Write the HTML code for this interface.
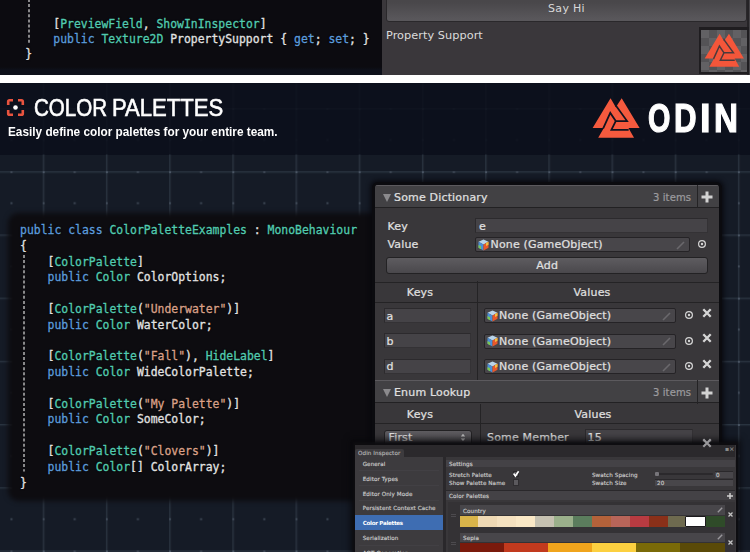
<!DOCTYPE html>
<html lang="en">
<head>
<meta charset="utf-8">
<title>Odin Inspector - Color Palettes</title>
<style>
*{margin:0;padding:0;box-sizing:border-box}
html,body{width:750px;height:560px;overflow:hidden;background:#fff}
body{position:relative;font-family:"Liberation Sans","DejaVu Sans",sans-serif;color:#e0e0e0}
.abs{position:absolute}
/* ---------- top strip ---------- */
#top{left:0;top:0;width:750px;height:75px;background:#0c0b10;overflow:hidden}
#topnavy{left:0;top:67px;width:382px;height:8px;background:linear-gradient(#0c0b10,#0d101a 40%)}
#topinsp{left:382px;top:0;width:368px;height:75px;background:#3a373b}
#sayhi{left:386px;top:-5px;width:361px;height:26.5px;border-radius:3px;background:linear-gradient(#49474a 25%,#59575b 92%);border:1px solid #2a282b;color:#d8d8d8;font-family:"DejaVu Sans","Liberation Sans",sans-serif;font-size:11px;letter-spacing:.3px;text-align:center;line-height:26px}
.code{font-family:"DejaVu Sans Mono","Liberation Mono",monospace;font-size:11.43px;letter-spacing:0px;line-height:15.78px;white-space:pre;color:#e2e2e2;-webkit-text-stroke:.3px currentColor;text-shadow:0 0 2px #000}
.k{color:#5c9cdc;-webkit-text-stroke-color:#5c9cdc}.t{color:#52cbb0;-webkit-text-stroke-color:#52cbb0}.s{color:#d9a088;-webkit-text-stroke-color:#d9a088}
/* ---------- main ---------- */
#main{left:0;top:83px;width:750px;height:469px;background:#0c101c;overflow:hidden}
#gridbg{left:0;top:71.5px;width:750px;height:398px;background:#151b26}
#title{left:34.6px;top:10.6px;font-size:24.4px;line-height:28px;color:#fff;white-space:nowrap;-webkit-text-stroke:.6px #fff}
#title span{position:absolute;top:0;display:block;transform-origin:0 0}
#t1{left:-.4px;transform:scaleX(.842)}#t2{left:77.9px;transform:scaleX(.905)}
#sub{left:8px;top:41px;font-size:12.3px;font-weight:bold;color:#fff;white-space:nowrap;line-height:16px;transform-origin:0 0;transform:scaleX(.96)}
#odin span{position:absolute;top:11.3px;font-size:40px;line-height:46px;font-weight:bold;color:#fff;-webkit-text-stroke:1.2px #fff;transform-origin:0 0;display:block}
#codebox{left:8px;top:130px;width:372px;height:288px;background:#0d0c10;border-radius:10px;filter:blur(2.6px)}

/* ---------- dictionary panel ---------- */
#dict{left:375px;top:185px;width:344px;height:270px;background:#39373a;border-radius:3px;box-shadow:0 0 0 3px #0b0b0f,0 0 4px 5px rgba(8,8,12,.8);font-family:"DejaVu Sans","Liberation Sans",sans-serif;font-size:11px;letter-spacing:.17px;color:#e0e0e0;overflow:hidden}
#dict .hdr{position:absolute;left:0;width:344px;height:23px;background:#424144;border-top:1px solid #5c5a5e;border-bottom:1.5px solid #222123}
#dict .ln{position:absolute;background:#242325}
#dict .tx{position:absolute;white-space:nowrap;line-height:14px;margin-top:.5px;-webkit-text-stroke:.22px currentColor}
#dict .fld{position:absolute;height:15px;background:#454347;border:1px solid #2c2a2d;border-bottom-color:#343235;border-right-color:#343235}
#dict .obj{position:absolute;height:15px;background:#48464a;border:1px solid #252326;border-radius:2px}
#dict .btn{position:absolute;border-radius:3px;background:linear-gradient(#5e5c60,#4a484c);border:1px solid #232224;text-align:center}
#dict .tri{position:absolute;width:0;height:0;border-left:4px solid transparent;border-right:4px solid transparent;border-top:8px solid #8b8a8d}
#dict .gray{color:#9c9b9e;font-size:10px;letter-spacing:.1px}

/* ---------- odin inspector window ---------- */
#win{left:355px;top:445px;width:381px;height:107px;background:#39373a;box-shadow:0 -1px 2px 2px rgba(14,13,16,.95),0 -1px 6px 5px rgba(8,8,12,.7);font-family:"DejaVu Sans","Liberation Sans",sans-serif;font-size:5.6px;color:#cdcdcd;-webkit-text-stroke:.15px currentColor;overflow:hidden;letter-spacing:.1px}
#win .wt{position:absolute;white-space:nowrap;line-height:8px}
#win .bar{position:absolute;background:#444246}
#win .sw{position:absolute;height:10.5px;top:0}
</style>
</head>
<body>
<!-- TOP STRIP -->
<div id="top" class="abs">
  <div id="topnavy" class="abs"></div>
  <svg class="abs" style="left:26px;top:0" width="6" height="46"><path d="M3 -1V45" stroke="#b2b2b2" stroke-width="1.5" stroke-dasharray="3 2.1" fill="none"/></svg>
  <div class="abs code" style="left:25.3px;top:16.5px;line-height:15.4px"><span style="display:inline-block;width:28px"></span>[<span class="t">PreviewField</span>, <span class="t">ShowInInspector</span>]
<span style="display:inline-block;width:28px"></span><span class="k">public</span> <span class="t">Texture2D</span> PropertySupport { <span class="k">get</span>; <span class="k">set</span>; }
}</div>
  <div id="topinsp" class="abs"></div>
  <div id="sayhi" class="abs">Say Hi</div>
  <div class="abs" style="left:747px;top:0;width:1.5px;height:75px;background:#252326"></div><div class="abs" style="left:748.5px;top:0;width:1.5px;height:75px;background:#454347"></div>
  <div id="ps" class="abs" style="left:386px;top:29.2px;font-family:'DejaVu Sans','Liberation Sans',sans-serif;font-size:11.3px;letter-spacing:.05px;color:#dcdcdc;white-space:nowrap">Property Support</div>
  <div class="abs" style="left:699px;top:27px;width:50px;height:47px;background:#1f1d20"></div>
  <svg class="abs" style="left:701px;top:30px" width="46" height="42" viewBox="0 0 46 42">
    <defs><pattern id="chk" width="16" height="16" patternUnits="userSpaceOnUse"><rect width="16" height="16" fill="#545356"/><rect width="8" height="8" fill="#626164"/><rect x="8" y="8" width="8" height="8" fill="#626164"/></pattern></defs>
    <rect width="46" height="42" fill="url(#chk)"/>
    <g transform="translate(-2.66,-1.47) scale(.0775,.0775)">
      <polygon fill="#f4563a" points="275,68 332,165 395,68 588,388 468,388 528,494 142,494 203,388 82,388"/>
      <g fill="none" stroke="#4a3a3c" stroke-width="19"><path d="M328,140 L453,313 L331,313 L284,409 L470,409"/><path d="M196,392 L272,225 L331,313"/></g>
    </g>
  </svg>
</div>

<!-- MAIN -->
<div id="main" class="abs">
  <div id="gridbg" class="abs"></div>
  <svg class="abs" style="left:0;top:0" width="750" height="469" viewBox="0 83 750 469">
    <defs>
      <pattern id="grid" x="42.7" y="171.2" width="63.2" height="63.2" patternUnits="userSpaceOnUse">
        <path d="M0 0.7H63.2M0.7 0V63.2" stroke="#222b37" stroke-width="3" fill="none" opacity=".4"/>
        <path d="M0 0.7H63.2M0.7 0V63.2" stroke="#29333f" stroke-width="1.2" fill="none"/>
        <rect x="-.6" y="-.6" width="2.6" height="2.6" fill="#4a5564"/>
        <rect x="31" y="-.2" width="2" height="2" fill="#434d5b"/>
        <rect x="-.2" y="31" width="2" height="2" fill="#434d5b"/>
        <rect x="31" y="31" width="2" height="2" fill="#3b4452"/>
      </pattern>
    </defs>
    <rect x="0" y="154.5" width="750" height="398" fill="url(#grid)"/>
    <rect x="0" y="83" width="750" height="71.5" fill="url(#grid)" opacity=".1"/>
  </svg>
  <svg class="abs" style="left:6px;top:15px" width="19" height="19" viewBox="0 0 19 19">
    <g fill="none" stroke="#e9543f" stroke-width="2.6" stroke-linejoin="round" stroke-linecap="butt">
      <path d="M2.2 7V3.6Q2.2 2.2 3.6 2.2H7"/><path d="M12 2.2H15.4Q16.8 2.2 16.8 3.6V7"/>
      <path d="M16.8 12V15.4Q16.8 16.8 15.4 16.8H12"/><path d="M7 16.8H3.6Q2.2 16.8 2.2 15.4V12"/>
    </g>
    <circle cx="9.5" cy="9.5" r="2.3" fill="#fff"/>
  </svg>
  <svg id="odinlogo" class="abs" style="left:585px;top:9px" width="60" height="52" viewBox="0 0 646 560">
    <g fill="#f55a3e">
      <polygon points="275,68 332,165 395,68 588,388 468,388 528,494 142,494 203,388 82,388"/>
    </g>
    <g fill="none" stroke="#10131f" stroke-width="19" stroke-linejoin="miter">
      <path d="M328,140 L453,313 L331,313 L284,409 L470,409"/>
      <path d="M196,392 L272,225 L331,313"/>
    </g>
  </svg>
  <div id="odin" class="abs" style="left:0;top:0"><span style="left:647.7px;transform:scale(.72,1.03)">O</span><span style="left:673.8px;transform:scale(.78,1.03)">D</span><span style="left:700.2px;transform:scale(.95,1.03)">I</span><span style="left:713.8px;transform:scale(.83,1.03)">N</span></div>
  <div id="title" class="abs"><span id="t1">COLOR</span> <span id="t2">PALETTES</span></div>
  <div id="sub" class="abs">Easily define color palettes for your entire team.</div>
  <div id="codebox" class="abs"></div>
  <svg class="abs" style="left:20.5px;top:172px" width="6" height="218"><path d="M3 0V216.5" stroke="#b2b2b2" stroke-width="1.5" stroke-dasharray="3 2.1" fill="none"/></svg>
  <div class="abs code" style="left:20px;top:140px"><span class="k">public</span> <span class="k">class</span> <span class="t">ColorPaletteExamples</span> : <span class="t">MonoBehaviour</span>
{
    [<span class="t">ColorPalette</span>]
    <span class="k">public</span> <span class="t">Color</span> ColorOptions;

    [<span class="t">ColorPalette</span>(<span class="s">"Underwater"</span>)]
    <span class="k">public</span> <span class="t">Color</span> WaterColor;

    [<span class="t">ColorPalette</span>(<span class="s">"Fall"</span>), <span class="t">HideLabel</span>]
    <span class="k">public</span> <span class="t">Color</span> WideColorPalette;

    [<span class="t">ColorPalette</span>(<span class="s">"My Palette"</span>)]
    <span class="k">public</span> <span class="t">Color</span> SomeColor;

    [<span class="t">ColorPalette</span>(<span class="s">"Clovers"</span>)]
    <span class="k">public</span> <span class="t">Color</span>[] ColorArray;
}</div>
</div>

<div class="abs" style="left:0;top:83px;width:750px;height:469px;overflow:hidden"><div class="abs" style="left:0;top:-83px;width:750px;height:560px">
<!-- DICTIONARY PANEL -->
<div id="dict" class="abs">
<div class="hdr" style="top:0"></div>
<div class="tri" style="left:8px;top:8.5px"></div>
<div class="tx" style="left:19px;top:5.5px">Some Dictionary</div>
<div class="tx gray" style="left:278px;top:5.5px">3 items</div>
<div class="ln" style="left:321.5px;top:0;width:1px;height:23px"></div>
<svg class="abs" style="left:326.4px;top:6px" width="12" height="12" viewBox="0 0 12 12"><path d="M6 .5V11.5M.5 6H11.5" stroke="#d2d2d2" stroke-width="3"/></svg>
<div class="tx" style="left:12.5px;top:34.5px">Key</div>
<div class="fld" style="left:100px;top:33.2px;width:233.29999999999995px"></div>
<div class="tx" style="left:104px;top:34.5px">e</div>
<div class="tx" style="left:12.5px;top:52.5px">Value</div>
<div class="obj" style="left:100px;top:52px;width:215px"></div>
<svg class="abs" style="left:103px;top:53.5px" width="11" height="12" viewBox="0 0 11 12"><polygon points="5.5,0.5 10.5,2.8 5.5,5.4 0.5,2.8" fill="#b9d4ea"/><polygon points="0.5,2.8 5.5,5.4 5.5,11.5 0.5,8.8" fill="#4a90d8"/><polygon points="10.5,2.8 5.5,5.4 5.5,11.5 10.5,8.8" fill="#e8582c"/><polygon points="0.5,6 3,7.2 3,10.2 0.5,8.8" fill="#7ec850"/><polygon points="8,4.1 10.5,2.8 10.5,5.8 8,7.1" fill="#f0c040"/></svg>
<div class="tx" style="left:115.5px;top:52.5px">None (GameObject)</div>
<svg class="abs" style="left:301px;top:55.5px" width="9" height="9" viewBox="0 0 9 9"><path d="M1 8L8 1" stroke="#6a686c" stroke-width="1.6"/></svg>
<svg class="abs" style="left:322.3px;top:54.30000000000001px" width="10" height="10" viewBox="0 0 10 10"><circle cx="5" cy="5" r="3.4" fill="none" stroke="#d4d4d4" stroke-width="1.2"/><circle cx="5" cy="5" r="1.2" fill="#d4d4d4"/></svg>
<div class="btn tx" style="left:11px;top:71px;width:322.3px;height:17.5px;line-height:15.5px">Add</div>
<div class="ln" style="left:0;top:96.8px;width:344px;height:1.2px"></div>
<div class="ln" style="left:0;top:117px;width:344px;height:1px"></div>
<div class="ln" style="left:102px;top:96px;width:1px;height:99px"></div>
<div class="tx" style="left:0px;width:90px;text-align:center;top:100.5px">Keys</div>
<div class="tx" style="left:102px;width:230px;text-align:center;top:100.5px">Values</div>
<div class="fld" style="left:8.5px;top:122.9px;width:87.0px"></div>
<div class="tx" style="left:11.5px;top:124.0px">a</div>
<div class="obj" style="left:108.5px;top:123.19999999999999px;width:192.5px"></div>
<svg class="abs" style="left:111.5px;top:124.69999999999999px" width="11" height="12" viewBox="0 0 11 12"><polygon points="5.5,0.5 10.5,2.8 5.5,5.4 0.5,2.8" fill="#b9d4ea"/><polygon points="0.5,2.8 5.5,5.4 5.5,11.5 0.5,8.8" fill="#4a90d8"/><polygon points="10.5,2.8 5.5,5.4 5.5,11.5 10.5,8.8" fill="#e8582c"/><polygon points="0.5,6 3,7.2 3,10.2 0.5,8.8" fill="#7ec850"/><polygon points="8,4.1 10.5,2.8 10.5,5.8 8,7.1" fill="#f0c040"/></svg>
<div class="tx" style="left:124px;top:123.69999999999999px">None (GameObject)</div>
<svg class="abs" style="left:287px;top:126.69999999999999px" width="9" height="9" viewBox="0 0 9 9"><path d="M1 8L8 1" stroke="#6a686c" stroke-width="1.6"/></svg>
<svg class="abs" style="left:309.4px;top:125.39999999999998px" width="10" height="10" viewBox="0 0 10 10"><circle cx="5" cy="5" r="3.4" fill="none" stroke="#d4d4d4" stroke-width="1.2"/><circle cx="5" cy="5" r="1.2" fill="#d4d4d4"/></svg>
<svg class="abs" style="left:327.0px;top:123.0px" width="10" height="10" viewBox="0 0 10 10"><path d="M1.3 1.3L8.7 8.7M8.7 1.3L1.3 8.7" stroke="#d6d6d6" stroke-width="2.3"/></svg>
<div class="fld" style="left:8.5px;top:148.3px;width:87.0px"></div>
<div class="tx" style="left:11.5px;top:149.39999999999998px">b</div>
<div class="obj" style="left:108.5px;top:148.59999999999997px;width:192.5px"></div>
<svg class="abs" style="left:111.5px;top:150.09999999999997px" width="11" height="12" viewBox="0 0 11 12"><polygon points="5.5,0.5 10.5,2.8 5.5,5.4 0.5,2.8" fill="#b9d4ea"/><polygon points="0.5,2.8 5.5,5.4 5.5,11.5 0.5,8.8" fill="#4a90d8"/><polygon points="10.5,2.8 5.5,5.4 5.5,11.5 10.5,8.8" fill="#e8582c"/><polygon points="0.5,6 3,7.2 3,10.2 0.5,8.8" fill="#7ec850"/><polygon points="8,4.1 10.5,2.8 10.5,5.8 8,7.1" fill="#f0c040"/></svg>
<div class="tx" style="left:124px;top:149.09999999999997px">None (GameObject)</div>
<svg class="abs" style="left:287px;top:152.09999999999997px" width="9" height="9" viewBox="0 0 9 9"><path d="M1 8L8 1" stroke="#6a686c" stroke-width="1.6"/></svg>
<svg class="abs" style="left:309.4px;top:150.79999999999995px" width="10" height="10" viewBox="0 0 10 10"><circle cx="5" cy="5" r="3.4" fill="none" stroke="#d4d4d4" stroke-width="1.2"/><circle cx="5" cy="5" r="1.2" fill="#d4d4d4"/></svg>
<svg class="abs" style="left:327.0px;top:148.4px" width="10" height="10" viewBox="0 0 10 10"><path d="M1.3 1.3L8.7 8.7M8.7 1.3L1.3 8.7" stroke="#d6d6d6" stroke-width="2.3"/></svg>
<div class="fld" style="left:8.5px;top:173.7px;width:87.0px"></div>
<div class="tx" style="left:11.5px;top:174.8px">d</div>
<div class="obj" style="left:108.5px;top:174.0px;width:192.5px"></div>
<svg class="abs" style="left:111.5px;top:175.5px" width="11" height="12" viewBox="0 0 11 12"><polygon points="5.5,0.5 10.5,2.8 5.5,5.4 0.5,2.8" fill="#b9d4ea"/><polygon points="0.5,2.8 5.5,5.4 5.5,11.5 0.5,8.8" fill="#4a90d8"/><polygon points="10.5,2.8 5.5,5.4 5.5,11.5 10.5,8.8" fill="#e8582c"/><polygon points="0.5,6 3,7.2 3,10.2 0.5,8.8" fill="#7ec850"/><polygon points="8,4.1 10.5,2.8 10.5,5.8 8,7.1" fill="#f0c040"/></svg>
<div class="tx" style="left:124px;top:174.5px">None (GameObject)</div>
<svg class="abs" style="left:287px;top:177.5px" width="9" height="9" viewBox="0 0 9 9"><path d="M1 8L8 1" stroke="#6a686c" stroke-width="1.6"/></svg>
<svg class="abs" style="left:309.4px;top:176.2px" width="10" height="10" viewBox="0 0 10 10"><circle cx="5" cy="5" r="3.4" fill="none" stroke="#d4d4d4" stroke-width="1.2"/><circle cx="5" cy="5" r="1.2" fill="#d4d4d4"/></svg>
<svg class="abs" style="left:327.0px;top:173.8px" width="10" height="10" viewBox="0 0 10 10"><path d="M1.3 1.3L8.7 8.7M8.7 1.3L1.3 8.7" stroke="#d6d6d6" stroke-width="2.3"/></svg>
<div class="hdr" style="top:195px"></div>
<div class="tri" style="left:8px;top:204px"></div>
<div class="tx" style="left:19px;top:200.5px">Enum Lookup</div>
<div class="tx gray" style="left:278px;top:200.5px">3 items</div>
<div class="ln" style="left:321.5px;top:195px;width:1px;height:24px"></div>
<svg class="abs" style="left:326.4px;top:201.5px" width="12" height="12" viewBox="0 0 12 12"><path d="M6 .5V11.5M.5 6H11.5" stroke="#d2d2d2" stroke-width="3"/></svg>
<div class="ln" style="left:0;top:238px;width:344px;height:1px"></div>
<div class="ln" style="left:104.5px;top:219px;width:1px;height:60px"></div>
<div class="tx" style="left:0px;width:90px;text-align:center;top:222.5px">Keys</div>
<div class="tx" style="left:104px;width:228px;text-align:center;top:222.5px">Values</div>
<div class="btn tx" style="left:8.5px;top:244px;width:88.5px;height:16px;line-height:14px;text-align:left;padding-left:4px">First</div>
<svg class="abs" style="left:85px;top:247.5px" width="6" height="9" viewBox="0 0 6 9"><path d="M.8 3.4L3 .8L5.2 3.4ZM.8 5.6L3 8.2L5.2 5.6Z" fill="#bdbdbd"/></svg><div class="tx" style="left:112px;top:245px">Some Member</div><svg class="abs" style="left:311px;top:247px" width="5" height="9" viewBox="0 0 5 9"><path d="M2.5 1V3.6M2.5 5.4V8" stroke="#6d6b70" stroke-width="1.2"/></svg>
<div class="fld" style="left:209.5px;top:244.2px;width:108.20000000000005px"></div>
<div class="tx" style="left:212.5px;top:245.5px">15</div>
<svg class="abs" style="left:327.0px;top:254.0px" width="10" height="10" viewBox="0 0 10 10"><path d="M1.3 1.3L8.7 8.7M8.7 1.3L1.3 8.7" stroke="#d6d6d6" stroke-width="2.3"/></svg>
</div>

<!-- ODIN INSPECTOR WINDOW -->
<div id="win" class="abs">
<div class="abs" style="left:0;top:0;width:380px;height:11.5px;background:#2b292c"></div>
<div class="abs" style="left:0;top:3.5px;width:48.5px;height:8.5px;background:#3d3b3e;border-radius:2px 2px 0 0"></div>
<div class="wt" style="left:3px;top:4px;color:#b4b4b4">Odin Inspector</div>
<div class="wt" style="left:370px;top:0px;color:#8a8a8a;font-size:6px">▪×</div>
<div class="abs" style="left:0;top:11.5px;width:88.3px;height:96px;background:#3d3b3e"></div>
<div class="abs" style="left:88.3px;top:11.5px;width:2.5px;height:96px;background:#2a282b"></div>
<div class="wt" style="left:7.699999999999989px;top:14.7px">General</div>
<div class="abs" style="left:4px;top:25.30000000000001px;width:80px;height:1px;background:#424044"></div>
<div class="wt" style="left:7.699999999999989px;top:29.7px">Editor Types</div>
<div class="abs" style="left:4px;top:40.30000000000001px;width:80px;height:1px;background:#424044"></div>
<div class="wt" style="left:7.699999999999989px;top:44.5px">Editor Only Mode</div>
<div class="abs" style="left:4px;top:55.10000000000002px;width:80px;height:1px;background:#424044"></div>
<div class="wt" style="left:7.699999999999989px;top:59.2px">Persistent Context Cache</div>
<div class="abs" style="left:4px;top:69.79999999999995px;width:80px;height:1px;background:#424044"></div>
<div class="abs" style="left:0;top:70px;width:88.3px;height:14.8px;background:#3e6db2"></div>
<div class="wt" style="left:7.699999999999989px;top:74.0px;color:#fff;font-weight:bold;letter-spacing:-.3px;-webkit-text-stroke:0">Color Palettes</div>
<div class="wt" style="left:7.699999999999989px;top:89.0px">Serialization</div>
<div class="abs" style="left:4px;top:99.59999999999991px;width:80px;height:1px;background:#424044"></div>
<div class="wt" style="left:7.699999999999989px;top:103.7px">AOT Generation</div>
<div class="abs" style="left:4px;top:114.29999999999995px;width:80px;height:1px;background:#424044"></div>
<div class="bar" style="left:91px;top:14.699999999999989px;width:289px;height:7.8px"></div>
<div class="wt" style="left:94px;top:14.5px">Settings</div>
<div class="wt" style="left:94px;top:25.9px">Stretch Palette</div>
<div class="wt" style="left:94px;top:34.4px">Show Palette Name</div>
<div class="abs" style="left:157.70000000000005px;top:25.69999999999999px;width:6.6px;height:6.6px;background:#555357;border:.5px solid #2a282b"></div>
<svg class="abs" style="left:157.20000000000005px;top:24.80000000000001px" width="8" height="8" viewBox="0 0 8 8"><path d="M1.6 3.6L3.4 6L6.6 1.2" fill="none" stroke="#fff" stroke-width="1.6"/></svg>
<div class="abs" style="left:157.70000000000005px;top:34.30000000000001px;width:6.6px;height:6.6px;background:#5b595d;border:.5px solid #2f2d30"></div>
<div class="wt" style="left:236.89999999999998px;top:25.9px">Swatch Spacing</div>
<div class="wt" style="left:236.89999999999998px;top:34.4px">Swatch Size</div>
<div class="abs" style="left:300.29999999999995px;top:28.19999999999999px;width:57.4px;height:2px;background:#2b292c;border-radius:1px"></div>
<div class="abs" style="left:300.29999999999995px;top:26.5px;width:4px;height:4.5px;background:#77757a;border-radius:1px"></div>
<div class="abs" style="left:359.79999999999995px;top:25.5px;width:18.5px;height:7px;background:#48464a;border-top:.5px solid #2a282b"></div>
<div class="wt" style="left:361px;top:25.9px">0</div>
<div class="abs" style="left:300.29999999999995px;top:34.30000000000001px;width:78px;height:7px;background:#48464a;border-top:.5px solid #2a282b"></div>
<div class="wt" style="left:302px;top:34.4px">20</div>
<div class="abs" style="left:91px;top:45px;width:289px;height:1px;background:#2a282b"></div>
<div class="bar" style="left:91px;top:46.39999999999998px;width:289px;height:9px"></div>
<div class="wt" style="left:94px;top:47.10000000000002px">Color Palettes</div>
<svg class="abs" style="left:372px;top:48px" width="6" height="6" viewBox="0 0 6 6"><path d="M3 0V6M0 3H6" stroke="#cfcfcf" stroke-width="1.5"/></svg>
<div class="abs" style="left:92.5px;top:56.5px;width:287.5px;height:60px;background:#343235"></div>
<div class="abs" style="left:104.5px;top:60.30000000000001px;width:265px;height:9.5px;background:#48464a"></div>
<div class="wt" style="left:108px;top:61.6px">Country</div>
<svg class="abs" style="left:362px;top:61.80000000000001px" width="6" height="6" viewBox="0 0 6 6"><path d="M.8 5.2L5.2 .8" stroke="#9a989c" stroke-width="1.4"/></svg>
<div class="abs" style="left:104.5px;top:71.0px;width:265px;height:10.5px;background:#1f1d20">
<div class="sw" style="left:0.00px;width:19.23px;height:10.5px;background:#d9b44a"></div>
<div class="sw" style="left:18.93px;width:19.23px;height:10.5px;background:#efd9b4"></div>
<div class="sw" style="left:37.86px;width:19.23px;height:10.5px;background:#f5e1bf"></div>
<div class="sw" style="left:56.79px;width:19.23px;height:10.5px;background:#fae8c6"></div>
<div class="sw" style="left:75.71px;width:19.23px;height:10.5px;background:#c6c1b1"></div>
<div class="sw" style="left:94.64px;width:19.23px;height:10.5px;background:#9bb08b"></div>
<div class="sw" style="left:113.57px;width:19.23px;height:10.5px;background:#5b7d5d"></div>
<div class="sw" style="left:132.50px;width:19.23px;height:10.5px;background:#b4623a"></div>
<div class="sw" style="left:151.43px;width:19.23px;height:10.5px;background:#b86559"></div>
<div class="sw" style="left:170.36px;width:19.23px;height:10.5px;background:#b83b41"></div>
<div class="sw" style="left:189.29px;width:19.23px;height:10.5px;background:#8a3019"></div>
<div class="sw" style="left:208.21px;width:19.23px;height:10.5px;background:#6e6a4f"></div>
<div class="sw" style="left:225.54px;width:21.2px;height:10.5px;background:#ffffff;border:1.2px solid #1c1a1d;border-radius:1px"></div>
<div class="sw" style="left:246.07px;width:19.23px;height:10.5px;background:#2f4b29"></div>
</div>
<svg class="abs" style="left:372.5px;top:67.29999999999995px" width="5" height="5" viewBox="0 0 5 5"><path d="M.5 .5L4.5 4.5M4.5 .5L.5 4.5" stroke="#c4c4c4" stroke-width="1.3"/></svg>
<div class="abs" style="left:95.5px;top:69.29999999999995px;width:5px;height:3px;border-top:1px solid #4c4a4e;border-bottom:1px solid #4c4a4e"></div>
<div class="abs" style="left:104.5px;top:87.5px;width:265px;height:9.5px;background:#48464a"></div>
<div class="wt" style="left:108px;top:88.8px">Sepia</div>
<svg class="abs" style="left:362px;top:89.0px" width="6" height="6" viewBox="0 0 6 6"><path d="M.8 5.2L5.2 .8" stroke="#9a989c" stroke-width="1.4"/></svg>
<div class="abs" style="left:104.5px;top:98.20000000000005px;width:265px;height:10.5px;background:#1f1d20">
<div class="sw" style="left:0.00px;width:44.47px;height:10.5px;background:#7a1a0c"></div>
<div class="sw" style="left:44.17px;width:44.47px;height:10.5px;background:#c23a1e"></div>
<div class="sw" style="left:88.33px;width:44.47px;height:10.5px;background:#f0a41c"></div>
<div class="sw" style="left:132.50px;width:44.47px;height:10.5px;background:#fcd040"></div>
<div class="sw" style="left:176.67px;width:44.47px;height:10.5px;background:#7a6a08"></div>
<div class="sw" style="left:220.83px;width:44.47px;height:10.5px;background:#5a4a08"></div>
</div>
<svg class="abs" style="left:372.5px;top:94.5px" width="5" height="5" viewBox="0 0 5 5"><path d="M.5 .5L4.5 4.5M4.5 .5L.5 4.5" stroke="#c4c4c4" stroke-width="1.3"/></svg>
<div class="abs" style="left:95.5px;top:96.5px;width:5px;height:3px;border-top:1px solid #4c4a4e;border-bottom:1px solid #4c4a4e"></div>
</div>
<svg class="abs" style="left:702px;top:438px" width="10" height="10" viewBox="0 0 10 10"><path d="M1.3 1.3L8.7 8.7M8.7 1.3L1.3 8.7" stroke="#9a999c" stroke-width="2.1"/></svg>
</div></div>
</body>
</html>
